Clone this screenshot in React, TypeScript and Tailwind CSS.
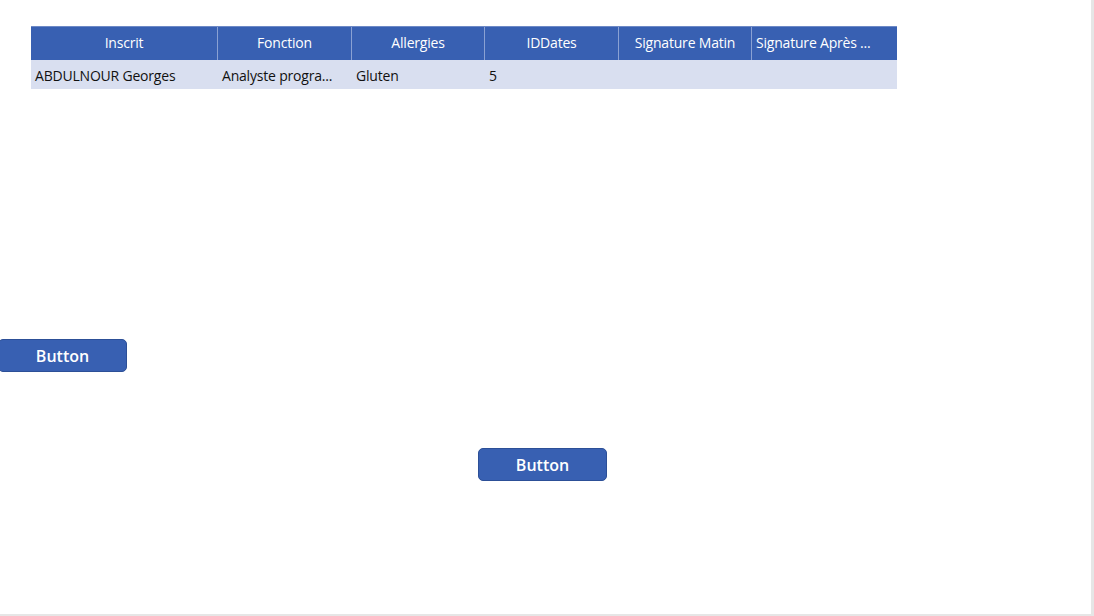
const columns = [
  { label: "Inscrit", width: "w-[186px]" },
  { label: "Fonction", width: "w-[134px]" },
  { label: "Allergies", width: "w-[133px]" },
  { label: "IDDates", width: "w-[134px]" },
  { label: "Signature Matin", width: "w-[133px]" },
  { label: "Signature Après ...", width: "w-[146px]", left: true },
];

const row = ["ABDULNOUR Georges", "Analyste progra...", "Gluten", "5", "", ""];

export default function App() {
  return (
    <div
      className="w-[1094px] h-[616px] bg-[#e6e6e6] overflow-hidden"
      style={{ fontFamily: '"Open Sans", "Noto Sans", sans-serif' }}
    >
      <div className="w-[1091px] h-[614px] bg-white flex flex-col">
        <div className="pt-[26px] pl-[31px]">
          <div className="w-[866px]">
            <div className="flex h-[34px] bg-[#3860b2] border-t border-[#6d89c6]">
              {columns.map((c, i) => (
                <div
                  key={c.label}
                  className={`${c.width} flex items-center pb-[2px] text-[14px] tracking-[-0.2px] text-white whitespace-nowrap ${
                    c.left ? "justify-start pl-[4px]" : "justify-center"
                  } ${i > 0 ? "border-l border-[#8aa1d3]" : ""}`}
                >
                  {c.label}
                </div>
              ))}
            </div>
            <div className="flex h-[29px] bg-[#d9dff0]">
              {row.map((v, i) => (
                <div
                  key={i}
                  className={`${columns[i].width} flex items-center pl-[4px] pt-[2px] text-[14px] tracking-[-0.2px] text-[#111] whitespace-nowrap ${
                    i > 0 ? "border-l border-transparent" : ""
                  }`}
                >
                  {v}
                </div>
              ))}
            </div>
          </div>
        </div>

        <div className="mt-[250px] ml-[-2px]">
          <button className="w-[129px] h-[33px] rounded-[5px] bg-[#3860b2] border border-[#2c4f97] text-white text-[16px] font-semibold">
            Button
          </button>
        </div>

        <div className="mt-[76px] ml-[478px]">
          <button className="w-[129px] h-[33px] rounded-[5px] bg-[#3860b2] border border-[#2c4f97] text-white text-[16px] font-semibold">
            Button
          </button>
        </div>
      </div>
    </div>
  );
}
